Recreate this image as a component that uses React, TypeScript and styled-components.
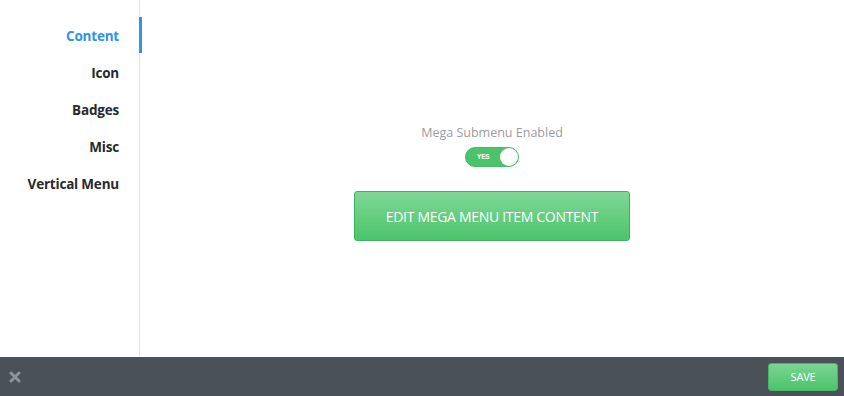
import React, { useState } from "react"
import styled, { createGlobalStyle } from "styled-components"

const GlobalStyle = createGlobalStyle`
  html, body {
    margin: 0;
    padding: 0;
    background: #fff;
  }
  body {
    font-family: "Open Sans", "Noto Sans", sans-serif;
  }
`

const Root = styled.div`
  width: 844px;
  height: 396px;
  display: flex;
  flex-direction: column;
  overflow: hidden;
`
const Body = styled.div`
  flex: 1;
  display: flex;
  min-height: 0;
`
const Sidebar = styled.nav`
  width: 139px;
  border-right: 1px solid #e3e5e8;
  padding-top: 17px;
  box-sizing: content-box;
`
const NavItem = styled.div<{ $active?: boolean }>`
  position: relative;
  height: 37px;
  line-height: 38px;
  text-align: right;
  padding-right: 20px;
  font-size: 13.5px;
  font-weight: 700;
  letter-spacing: -0.2px;
  color: ${(p) => (p.$active ? "#3390f0" : "#262a2e")};
  cursor: pointer;
  &::after {
    content: "";
    display: ${(p) => (p.$active ? "block" : "none")};
    position: absolute;
    right: -3px;
    top: 0;
    width: 3px;
    height: 36px;
    background: #3391f2;
  }
`
const Main = styled.div`
  flex: 1;
  display: flex;
  flex-direction: column;
  align-items: center;
  padding-top: 124px;
`
const FieldLabel = styled.div`
  font-size: 12.5px;
  color: #999da2;
  line-height: 17px;
`
const Toggle = styled.button<{ $on: boolean }>`
  margin-top: 6px;
  width: 54px;
  height: 20px;
  border-radius: 10px;
  border: 1px solid #48bb66;
  background: ${(p) => (p.$on ? "#4cc26b" : "#d4d7db")};
  padding: 0;
  position: relative;
  cursor: pointer;
  box-sizing: border-box;
`
const ToggleText = styled.span`
  position: absolute;
  left: 11px;
  top: 0;
  line-height: 18px;
  font-size: 6.5px;
  font-weight: 700;
  color: #fff;
  letter-spacing: -0.2px;
`
const Knob = styled.span<{ $on: boolean }>`
  position: absolute;
  top: 0;
  ${(p) => (p.$on ? "right: 0;" : "left: 0;")}
  width: 18px;
  height: 18px;
  border-radius: 50%;
  background: #fff;
`
const EditButton = styled.button`
  margin-top: 24px;
  width: 276px;
  height: 50px;
  border: 1px solid #3fb060;
  border-radius: 3px;
  background: linear-gradient(#7fd896, #4cc46b);
  color: #fff;
  font-family: "Open Sans", "Noto Sans", sans-serif;
  font-size: 14px;
  letter-spacing: -0.3px;
  cursor: pointer;
`
const Footer = styled.footer`
  height: 39px;
  background: #4a5159;
  display: flex;
  align-items: center;
  justify-content: space-between;
  padding: 0 6px 0 9px;
`
const CloseButton = styled.span`
  display: flex;
  width: 12px;
  height: 12px;
  cursor: pointer;
`
const SaveButton = styled.button`
  width: 70px;
  height: 28px;
  border: 1px solid #44b664;
  border-radius: 3px;
  background: linear-gradient(#7ad592, #4cc36b);
  color: #fff;
  font-family: "Open Sans", "Noto Sans", sans-serif;
  font-size: 11px;
  letter-spacing: -0.2px;
  cursor: pointer;
`

const tabs = ["Content", "Icon", "Badges", "Misc", "Vertical Menu"]

export default function App() {
  const [active, setActive] = useState(0)
  const [enabled, setEnabled] = useState(true)
  return (
    <Root>
      <GlobalStyle />
      <Body>
        <Sidebar>
          {tabs.map((t, i) => (
            <NavItem key={t} $active={i === active} onClick={() => setActive(i)}>
              {t}
            </NavItem>
          ))}
        </Sidebar>
        <Main>
          <FieldLabel>Mega Submenu Enabled</FieldLabel>
          <Toggle $on={enabled} onClick={() => setEnabled(!enabled)}>
            {enabled && <ToggleText>YES</ToggleText>}
            <Knob $on={enabled} />
          </Toggle>
          <EditButton>EDIT MEGA MENU ITEM CONTENT</EditButton>
        </Main>
      </Body>
      <Footer>
        <CloseButton>
          <svg width="12" height="12" viewBox="0 0 12 12">
            <path d="M2 2 L10 10 M10 2 L2 10" stroke="#8b939b" strokeWidth="3" strokeLinecap="round" />
          </svg>
        </CloseButton>
        <SaveButton>SAVE</SaveButton>
      </Footer>
    </Root>
  )
}
